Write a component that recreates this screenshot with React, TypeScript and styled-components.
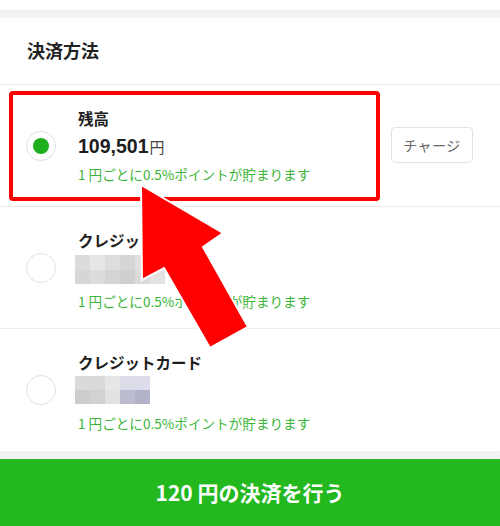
import React from "react";
import styled, { createGlobalStyle } from "styled-components";

const Global = createGlobalStyle`
  html, body { margin: 0; padding: 0; background: #ffffff; }
  body { font-family: "Noto Sans CJK JP", "Noto Sans", sans-serif; color: #222; }
  * { box-sizing: border-box; }
`;

const Page = styled.div`
  position: relative;
  width: 500px;
  height: 526px;
  overflow: hidden;
  display: flex;
  flex-direction: column;
  background: #fff;
`;

const TopStrip = styled.div`
  height: 10px;
  background: #fff;
`;

const Band = styled.div`
  height: 8px;
  background: linear-gradient(#f0f0f0, #f4f4f4);
  flex-shrink: 0;
`;

const SectionHeader = styled.div`
  height: 67px;
  display: flex;
  align-items: center;
  padding-left: 27px;
  font-size: 18px;
  font-weight: 700;
  color: #222;
  border-bottom: 1px solid #ececec;
  padding-bottom: 2px;
`;

const MethodRow = styled.div<{ $last?: boolean }>`
  height: ${(p) => (p.$last ? 121 : 122)}px;
  display: flex;
  align-items: center;
  padding: 0 27px 0 26px;
  border-bottom: ${(p) => (p.$last ? "none" : "1px solid #ececec")};
`;

const Radio = styled.div<{ $checked?: boolean }>`
  width: 30px;
  height: 30px;
  border-radius: 50%;
  border: 1px solid #e0e0e0;
  display: flex;
  align-items: center;
  justify-content: center;
  flex-shrink: 0;
  &::after {
    content: "";
    display: ${(p) => (p.$checked ? "block" : "none")};
    width: 16px;
    height: 16px;
    border-radius: 50%;
    background: #1fae1d;
  }
`;

const Body = styled.div`
  flex: 1;
  align-self: flex-start;
  margin-left: 22px;
  padding-top: 23px;
  display: flex;
  flex-direction: column;
`;

const Title = styled.div`
  font-size: 15.5px;
  font-weight: 700;
  line-height: 20px;
  color: #1e1e1e;
`;

const Amount = styled.div`
  margin-top: 4px;
  line-height: 28px;
  font-family: "Liberation Sans", Arial, sans-serif;
  font-size: 19.5px;
  font-weight: 700;
  color: #1e1e1e;
`;

const Yen = styled.span`
  font-family: "Noto Sans CJK JP", sans-serif;
  font-size: 15px;
  font-weight: 400;
  color: #444;
  margin-left: 1px;
`;

const PointNote = styled.div<{ $gap: number }>`
  margin-top: ${(p) => p.$gap}px;
  font-size: 13.6px;
  line-height: 18px;
  color: #3cb53a;
  white-space: nowrap;
`;

const Mosaic = styled.div<{ $cols: number; $h: number; $gap: number }>`
  margin-top: ${(p) => p.$gap}px;
  margin-left: -3px;
  display: grid;
  grid-template-columns: repeat(${(p) => p.$cols}, 15px);
  grid-auto-rows: ${(p) => p.$h / 2}px;
`;

const Cell = styled.div<{ $c: string }>`
  background: ${(p) => p.$c};
`;

const ChargeButton = styled.button`
  width: 82px;
  height: 36px;
  border: 1px solid #e4e4e4;
  border-radius: 4px;
  background: #fff;
  font-family: inherit;
  font-size: 14px;
  color: #666;
  letter-spacing: 0.5px;
  padding: 0;
  margin-top: -2px;
`;

const Spacer = styled.div`
  flex: 1;
`;

const PayButton = styled.button`
  height: 67px;
  border: none;
  background: #22b81e;
  color: #fff;
  font-family: inherit;
  font-size: 21px;
  font-weight: 700;
  display: flex;
  align-items: center;
  justify-content: center;
  padding: 0 0 2px 0;
  flex-shrink: 0;
`;

const Highlight = styled.div`
  position: absolute;
  left: 9px;
  top: 91px;
  width: 371px;
  height: 110px;
  border: 4px solid #ff0000;
  border-radius: 4px;
  pointer-events: none;
`;

const ArrowLayer = styled.svg`
  position: absolute;
  left: 0;
  top: 0;
  pointer-events: none;
`;

const mosaicA = [
  "#dcdcdc", "#e6e6e6", "#dddddd", "#d6d6d6", "#e0e0e0", "#e8e8e8",
  "#d6d6d6", "#dcdcdc", "#d4d4d4", "#cfcfcf", "#dadada", "#e2e2e2",
];
const mosaicB = [
  "#dadada", "#dadada", "#e6e6e6", "#dcdce8", "#dcdcea",
  "#cdcdcd", "#d2d2d2", "#e2e2e2", "#bcbcd0", "#b2b2c8",
];

const NOTE = "1 円ごとに0.5%ポイントが貯まります";

export default function App() {
  return (
    <>
      <Global />
      <Page>
        <TopStrip />
        <Band />
        <SectionHeader>決済方法</SectionHeader>

        <MethodRow>
          <Radio $checked />
          <Body>
            <Title>残高</Title>
            <Amount>
              109,501<Yen>円</Yen>
            </Amount>
            <PointNote $gap={4}>{NOTE}</PointNote>
          </Body>
          <ChargeButton>チャージ</ChargeButton>
        </MethodRow>

        <MethodRow>
          <Radio />
          <Body>
            <Title>クレジットカード</Title>
            <Mosaic $cols={6} $h={29} $gap={5}>
              {mosaicA.map((c, i) => (
                <Cell key={i} $c={c} />
              ))}
            </Mosaic>
            <PointNote $gap={8}>{NOTE}</PointNote>
          </Body>
        </MethodRow>

        <MethodRow $last>
          <Radio />
          <Body>
            <Title>クレジットカード</Title>
            <Mosaic $cols={5} $h={28} $gap={4}>
              {mosaicB.map((c, i) => (
                <Cell key={i} $c={c} />
              ))}
            </Mosaic>
            <PointNote $gap={10}>{NOTE}</PointNote>
          </Body>
        </MethodRow>

        <Spacer />
        <Band />
        <PayButton>120 円の決済を行う</PayButton>

        <Highlight />
        <ArrowLayer width="500" height="526" viewBox="0 0 500 526">
          <polygon
            points="141,185 223,233 203,247 248,327 210,348 164,268 142,280"
            fill="#ff0000"
            stroke="#ffffff"
            strokeWidth="2"
            strokeLinejoin="miter"
          />
        </ArrowLayer>
      </Page>
    </>
  );
}
